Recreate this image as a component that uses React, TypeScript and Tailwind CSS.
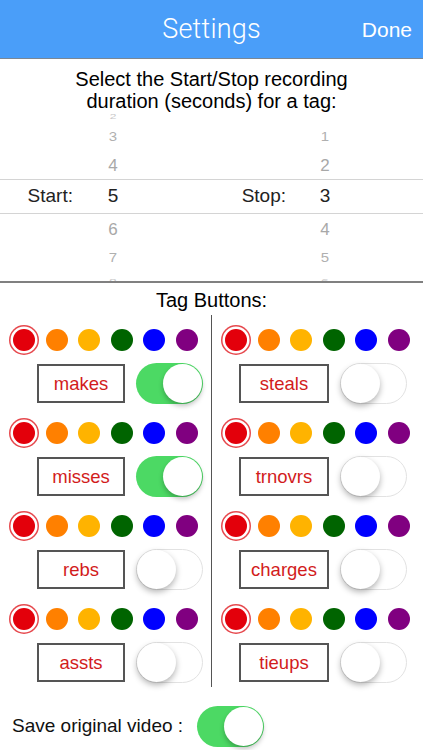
import React from "react";

const COLORS = ["#e3000b", "#ff8000", "#ffb300", "#006400", "#0000ff", "#800080"];

function Toggle({ on }: { on: boolean }) {
  if (on) {
    return (
      <div className="flex h-[41px] w-[67px] shrink-0 items-center justify-end rounded-full bg-[#4cd964] p-[1px]">
        <div className="h-[39px] w-[39px] rounded-full bg-white shadow-[0_3px_5px_rgba(0,0,0,0.25)]" />
      </div>
    );
  }
  return (
    <div className="flex h-[41px] w-[67px] shrink-0 items-center justify-start rounded-full border-[1.5px] border-[#e2e2e2] bg-white">
      <div className="h-[39px] w-[39px] rounded-full bg-white shadow-[0_3px_6px_rgba(0,0,0,0.3)]" />
    </div>
  );
}

function Dots() {
  return (
    <div className="flex h-[22px] items-center justify-center gap-[10.5px]">
      {COLORS.map((c, i) => (
        <div
          key={c}
          className={
            i === 0
              ? "h-[22px] w-[22px] rounded-full shadow-[0_0_0_2.5px_#ffffff,0_0_0_4px_#e6484d]"
              : "h-[22px] w-[22px] rounded-full"
          }
          style={{ backgroundColor: c }}
        />
      ))}
    </div>
  );
}

function TagCell({ label, on, right }: { label: string; on: boolean; right?: boolean }) {
  return (
    <div className="flex h-[93px] flex-col pt-[14px]">
      <Dots />
      <div className={right ? "mt-[12px] flex items-center gap-[11px] pl-[27px]" : "mt-[12px] flex items-center gap-[11px] pl-[37px]"}>
        <div
          className={
            right
              ? "flex h-[39px] w-[90px] items-center justify-center border-2 border-[#555555] text-[18.5px] text-[#d21c1c]"
              : "flex h-[39px] w-[88px] items-center justify-center border-2 border-[#555555] text-[18.5px] text-[#d21c1c]"
          }
        >
          {label}
        </div>
        <Toggle on={on} />
      </div>
    </div>
  );
}

function PickerRow({
  h,
  a,
  b,
  cls,
}: {
  h: string;
  a: string;
  b: string;
  cls: string;
}) {
  return (
    <div className={"grid grid-cols-[88px_50px_162px_50px_1fr] " + h}>
      <div />
      <div className="flex items-center justify-center">
        <span className={cls}>{a}</span>
      </div>
      <div />
      <div className="flex items-center justify-center">
        <span className={cls}>{b}</span>
      </div>
      <div />
    </div>
  );
}

export default function App() {
  return (
    <div
      className="h-[750px] w-[423px] overflow-hidden bg-white text-black"
      style={{ fontFamily: '"Liberation Sans", Arial, sans-serif' }}
    >
      {/* Header */}
      <div className="grid h-[59px] grid-cols-[1fr_auto_1fr] items-center border-b border-[#7b8794] bg-[#4a9ef9]">
        <div />
        <div className="text-[27px] font-light tracking-[0.2px] text-white" style={{ fontFamily: "Roboto, 'Liberation Sans', sans-serif" }}>
          Settings
        </div>
        <div className="justify-self-end pr-[11px] pt-[2px] text-[21px] text-white">Done</div>
      </div>

      {/* Instruction */}
      <div className="pt-[9px] text-center text-[20px] leading-[22px] text-black">
        <div>Select the Start/Stop recording</div>
        <div>duration (seconds) for a tag:</div>
      </div>

      {/* Picker */}
      <div className="border-b-2 border-[#808080]">
        <PickerRow h="h-[10px]" a="2" b="" cls="inline-block text-[12px] leading-[10px] text-[#c8c8c8] scale-y-[0.6]" />
        <PickerRow h="h-[30px]" a="3" b="1" cls="inline-block text-[15px] leading-[16px] text-[#b0b0b0] scale-y-[0.8]" />
        <PickerRow h="h-[27px]" a="4" b="2" cls="inline-block text-[17px] leading-[18px] text-[#a8a8a8] scale-y-[0.95]" />
        <div className="grid h-[35px] grid-cols-[88px_50px_162px_50px_1fr] items-center border-y border-[#d4d4d4] text-[19px] text-[#222]">
          <div className="pr-[15px] text-right">Start:</div>
          <div className="text-center">5</div>
          <div className="pr-[14px] text-right">Stop:</div>
          <div className="text-center">3</div>
          <div />
        </div>
        <PickerRow h="h-[31px]" a="6" b="4" cls="inline-block text-[17px] leading-[18px] text-[#a8a8a8] scale-y-[0.95]" />
        <PickerRow h="h-[25px]" a="7" b="5" cls="inline-block text-[15px] leading-[16px] text-[#b0b0b0] scale-y-[0.8]" />
        <div className="grid h-[11px] grid-cols-[88px_50px_162px_50px_1fr] overflow-hidden">
          <div />
          <div className="flex items-start justify-center pt-[4px]">
            <span className="inline-block text-[14px] leading-none text-[#c8c8c8] scale-y-[0.5]">8</span>
          </div>
          <div />
          <div className="flex items-start justify-center pt-[4px]">
            <span className="inline-block text-[14px] leading-none text-[#c8c8c8] scale-y-[0.5]">6</span>
          </div>
          <div />
        </div>
      </div>

      {/* Tag Buttons title */}
      <div className="pb-[4px] pt-[6px] text-center text-[20px] leading-[22px] text-black">Tag Buttons:</div>

      {/* Tag grid */}
      <div className="grid grid-cols-[212px_1fr] pb-[8px]">
        <div className="border-r-[1.5px] border-[#555555]">
          <TagCell label="makes" on />
          <TagCell label="misses" on />
          <TagCell label="rebs" on={false} />
          <TagCell label="assts" on={false} />
        </div>
        <div>
          <TagCell label="steals" on={false} right />
          <TagCell label="trnovrs" on={false} right />
          <TagCell label="charges" on={false} right />
          <TagCell label="tieups" on={false} right />
        </div>
      </div>

      {/* Save original video */}
      <div className="mt-[11px] flex h-[41px] items-center pl-[12px]">
        <div className="w-[185px] text-[19px] text-[#111]">Save original video :</div>
        <Toggle on />
      </div>
    </div>
  );
}
